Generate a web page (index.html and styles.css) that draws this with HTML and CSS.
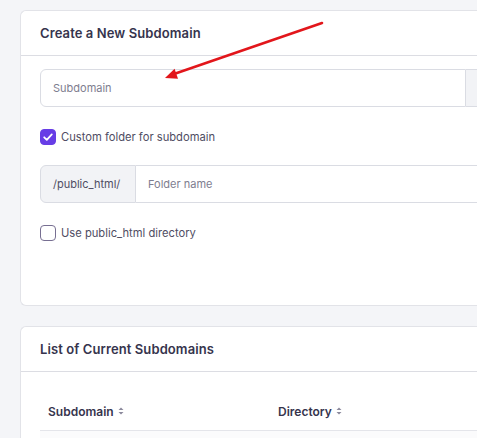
FILE: index.html
```html
<!DOCTYPE html>
<html>
<head>
<meta charset="utf-8">
<link rel="stylesheet" href="styles.css">
</head>
<body>
<main class="page">
  <section class="card card-create">
    <header class="card-head"><h2 class="card-title">Create a New Subdomain</h2></header>
    <div class="card-body">
      <div class="field-group">
        <div class="field"><span class="placeholder">Subdomain</span></div>
        <div class="addon addon-right"></div>
      </div>
      <label class="check-row">
        <span class="box checked">
          <svg viewBox="0 0 16 16" width="16" height="16"><path d="M4.2 8.3l2.6 2.5 5-5.4" fill="none" stroke="#fff" stroke-width="1.8" stroke-linecap="round" stroke-linejoin="round"/></svg>
        </span>
        <span class="check-label">Custom folder for subdomain</span>
      </label>
      <div class="field-group">
        <div class="addon addon-left">/public_html/</div>
        <div class="field field-joined"><span class="placeholder">Folder name</span></div>
      </div>
      <label class="check-row">
        <span class="box"></span>
        <span class="check-label">Use public_html directory</span>
      </label>
    </div>
  </section>
  <section class="card card-list">
    <header class="card-head"><h2 class="card-title">List of Current Subdomains</h2></header>
    <div class="table">
      <div class="thead">
        <div class="th th-sub">Subdomain <svg class="sort" width="6" height="8" viewBox="0 0 6 8"><path d="M3 0.5L5.5 3H0.5z M3 7.5L5.5 5H0.5z" fill="#8b899c"/></svg></div>
        <div class="th">Directory <svg class="sort" width="6" height="8" viewBox="0 0 6 8"><path d="M3 0.5L5.5 3H0.5z M3 7.5L5.5 5H0.5z" fill="#8b899c"/></svg></div>
      </div>
      <div class="trow"></div>
    </div>
  </section>
</main>
<svg class="arrow" width="477" height="438" viewBox="0 0 477 438">
  <line x1="322" y1="23" x2="174" y2="74" stroke="#e2161b" stroke-width="2.6" stroke-linecap="round"/>
  <polygon points="165,78 178,78.7 174.6,68.8" fill="#e2161b"/>
</svg>
</body>
</html>
```
FILE: styles.css
```css
html, body {
  margin: 0;
  padding: 0;
}
body {
  background: #f4f5f8;
  width: 477px;
  height: 438px;
  overflow: hidden;
  font-family: Inter, "DejaVu Sans", sans-serif;
  position: relative;
}
.page {
  padding: 10px 0 0 20px;
  display: flex;
  flex-direction: column;
  gap: 20px;
}
.card {
  width: 457px;
  background: #fff;
  border: 1px solid #e2e3e8;
  border-right: 0;
  border-radius: 6px 0 0 6px;
  box-sizing: border-box;
}
.card-head {
  border-bottom: 1px solid #dcdde3;
  padding: 0 19px;
  height: 44px;
  display: flex;
  align-items: center;
}
.card-title {
  margin: 0;
  font-size: 13px;
  font-weight: 600;
  color: #36344d;
  letter-spacing: 0.1px;
}
.card-body {
  padding: 13px 0 0 19px;
  height: 249px;
  box-sizing: border-box;
}
.field-group {
  display: flex;
  height: 38px;
}
.field {
  width: 426px;
  box-sizing: border-box;
  border: 1px solid #dadce3;
  border-radius: 6px 0 0 6px;
  display: flex;
  align-items: center;
  padding-left: 12px;
  font-size: 11px;
}
.field-joined {
  border-radius: 0;
  border-left: 0;
  border-right: 0;
  flex: 1;
}
.placeholder {
  color: #7e7d8f;
}
.addon {
  background: #f2f3f6;
  border: 1px solid #dadce3;
  box-sizing: border-box;
  display: flex;
  align-items: center;
  font-size: 11px;
  color: #4f4d63;
}
.addon-right {
  flex: 1;
  border-left: 0;
  border-right: 0;
}
.addon-left {
  width: 96px;
  border-radius: 6px 0 0 6px;
  padding-left: 12px;
}
.check-row {
  display: flex;
  align-items: center;
  gap: 5px;
  height: 16px;
  margin: 21px 0 20px;
}
.box {
  width: 16px;
  height: 16px;
  box-sizing: border-box;
  border: 1.5px solid #776f92;
  border-radius: 4px;
  display: flex;
}
.box.checked {
  background: #673de6;
  border-color: #673de6;
}
.box.checked svg {
  margin: -1.5px;
}
.check-label {
  font-size: 11.2px;
  color: #4f4d63;
}
.field-group + .check-row {
  margin-top: 22px;
}
.table {
  padding: 20px 0 0 19px;
}
.thead {
  display: flex;
  height: 38px;
  align-items: center;
  border-bottom: 1px solid #e4e5ea;
}
.th {
  font-size: 12px;
  font-weight: 600;
  color: #36344d;
  padding-left: 8px;
  display: flex;
  align-items: center;
  gap: 4px;
}
.th-sub {
  width: 230px;
  box-sizing: border-box;
}
.sort {
  display: block;
}
.trow {
  height: 20px;
  background: #fbfbfc;
}
.arrow {
  position: absolute;
  left: 0;
  top: 0;
  pointer-events: none;
}
```
